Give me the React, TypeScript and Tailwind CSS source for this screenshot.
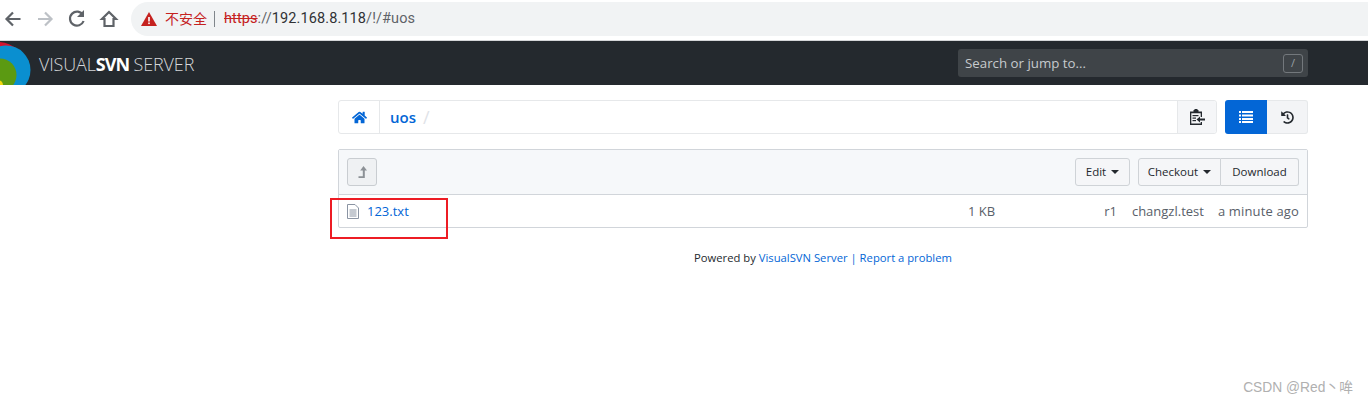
import { FaHome, FaHistory } from "react-icons/fa";

const FONT = "font-['Open_Sans','Noto_Sans_CJK_SC',sans-serif]";

const BrowserBar = () => (
  <div className="h-[41px] bg-white flex items-start border-b border-[#d4d6d8] font-['Roboto','Noto_Sans_CJK_SC',sans-serif]">
    <div className="w-[131px] h-[38px] flex items-center shrink-0">
      <svg width="131" height="38" viewBox="0 0 131 38" fill="none">
        <path d="M20.500 19H7M13 12.500L6.500 19l6.500 6.500" stroke="#5f6368" strokeWidth="2.200" />
        <path d="M38 19h13.500M45 12.500l6.500 6.500-6.500 6.500" stroke="#bdc1c6" strokeWidth="2.200" />
        <path d="M83 15a7 7 0 1 0 .6 6" stroke="#5f6368" strokeWidth="2.200" />
        <path d="M84 10v7h-7z" fill="#5f6368" />
        <path d="M109 12l-7 7H104.500v7h9v-7h2.500z" stroke="#5f6368" strokeWidth="2.200" strokeLinejoin="miter" />
      </svg>
    </div>
    <div className="mt-[2px] flex-1 h-[34px] bg-[#f1f3f4] rounded-l-[17px] flex items-center pl-[10px]">
      <svg width="16" height="14" viewBox="0 0 16 14" className="mr-[8px]">
        <path d="M8 0l8 14H0z" fill="#c5221f" />
        <rect x="7.200" y="5" width="1.600" height="4.500" fill="#fff" />
        <rect x="7.200" y="10.500" width="1.600" height="1.600" fill="#fff" />
      </svg>
      <span className="text-[14px] text-[#c5221f] leading-none">不安全</span>
      <span className="w-px h-[16px] bg-[#80868b] mx-[7px]" />
      <span className="ml-[2px] text-[14.500px] text-[#5f6368] tracking-[0.1px]">
        <span className="text-[#c5221f] line-through">https</span>://<span className="text-[#303134]">192.168.8.118</span>/!/#uos
      </span>
    </div>
  </div>
);

const Logo = () => (
  <div className="w-[31px] h-[44px] relative overflow-hidden shrink-0">
    <svg width="31" height="44" viewBox="0 0 31 44">
      <circle cx="-2" cy="30" r="29" fill="#d3122f" />
      <circle cx="6" cy="29" r="24.500" fill="#0a8fd0" />
      <circle cx="0" cy="34" r="16.500" fill="#5b9a12" />
      <circle cx="-2" cy="44" r="5" fill="#f2d70f" />
    </svg>
  </div>
);

const NavBar = () => (
  <div className={`h-[44px] bg-[#24292e] flex items-center ${FONT}`}>
    <Logo />
    <div className="ml-[8px] mt-[3px] text-[#d5d7d9] text-[18px] tracking-[-0.15px] whitespace-nowrap font-light">
      VISUAL<span className="font-bold text-white tracking-[-1px]">SVN</span> SERVER
    </div>
    <div className="ml-auto mr-[60px] w-[350px] h-[28px] bg-[#3f4448] rounded-[3px] flex items-center justify-between pl-[7px] pr-[5px]">
      <span className="mt-[1px] text-[13.300px] text-[#c6cacd]">Search or jump to...</span>
      <span className="w-[20px] h-[19px] border border-[#73787c] rounded-[3px] text-[#9aa0a4] text-[11px] flex items-center justify-center">/</span>
    </div>
  </div>
);

const ClipboardIcon = () => (
  <svg width="15" height="16" viewBox="0 0 15 16" fill="#24292e">
    <path d="M0 2.500h3.500V1h5v1.500H12V8h-1.300V4.200H1.300v10.300h9.400V13H12v3H0z" />
    <rect x="4.500" y="0" width="3" height="3.500" />
    <rect x="2.500" y="6" width="6" height="1.200" />
    <rect x="2.500" y="8.500" width="3.500" height="1.200" />
    <rect x="2.500" y="11" width="3.500" height="1.200" />
    <path d="M6.500 10.500l3.500-3v2h5v2h-5v2z" />
  </svg>
);

const ListIcon = () => (
  <svg width="14" height="12" viewBox="0 0 14 12" fill="#fff">
    {[0, 3.500, 7, 10].map((y) => (
      <g key={y}>
        <rect x="0" y={y} width="2" height="2" />
        <rect x="3" y={y} width="11" height="2" />
      </g>
    ))}
  </svg>
);

const FileIcon = () => (
  <svg width="12" height="15" viewBox="0 0 12 15" fill="none" stroke="#8a94a3">
    <path d="M.5.500h7.500l3.500 3.500v10.500H.5z" fill="#fff" />
    <path d="M2.500 6h7M2.500 8h7M2.500 10h7M2.500 12h7" />
  </svg>
);

const UpIcon = () => (
  <svg width="9" height="12" viewBox="0 0 9 12" fill="#8c9196">
    <path d="M5.500 0L9 4.500H6.800V12H.5v-1.800h4.300V4.500H2.200z" />
  </svg>
);

const Breadcrumb = () => (
  <div className="flex mt-[15px]">
    <div className="flex-1 h-[34px] border border-[#e6e8ea] rounded-[3px] flex items-center">
      <div className="w-[41px] h-full border-r border-[#e6e8ea] flex items-center justify-center text-[#0366d6] text-[15px]">
        <FaHome />
      </div>
      <span className="ml-[10px] text-[15px] font-semibold text-[#0366d6]">uos</span>
      <span className="ml-[7px] text-[18px] text-[#dfe3e8]">/</span>
      <div className="ml-auto w-[39px] h-full bg-[#f5f6f8] border-l border-[#e6e8ea] rounded-r-[3px] flex items-center justify-center">
        <ClipboardIcon />
      </div>
    </div>
    <div className="ml-[8px] flex h-[34px]">
      <div className="w-[42px] bg-[#0366d6] rounded-l-[3px] flex items-center justify-center">
        <ListIcon />
      </div>
      <div className="w-[41px] bg-[#f3f4f6] border border-l-0 border-[#e6e8ea] rounded-r-[3px] flex items-center justify-center text-[13px] text-[#24292e]">
        <FaHistory />
      </div>
    </div>
  </div>
);

const btn = "h-[28px] px-[10px] flex items-center text-[11.500px] font-medium text-[#24292e] bg-[#f5f6f8] border border-[#cfd3d7]";

const Caret = () => (
  <span className="ml-[5px] w-0 h-0 border-x-[4px] border-x-transparent border-t-[4px] border-t-[#24292e]" />
);

const FilePanel = () => (
  <div className="mt-[15px] border border-[#d1d5da] rounded-[2px] relative">
    <div className="h-[45px] bg-[#f6f8fa] border-b border-[#d1d5da] flex items-center px-[8px]">
      <div className="w-[30px] h-[28px] bg-[#eff1f3] border border-[#c9cdd1] rounded-[3px] flex items-center justify-center">
        <UpIcon />
      </div>
      <div className={`${btn} ml-auto rounded-[3px] w-[55px] justify-center`}>
        Edit
        <Caret />
      </div>
      <div className={`${btn} ml-[8px] rounded-l-[3px] w-[83px] justify-center`}>
        Checkout
        <Caret />
      </div>
      <div className={`${btn} border-l-0 rounded-r-[3px] w-[78px] justify-center`}>Download</div>
    </div>
    <div className="h-[32px] pt-[1px] flex items-center pl-[8px] pr-[8px] text-[13px] text-[#586069]">
      <FileIcon />
      <span className="ml-[8px] text-[13px] text-[#0366d6]">123.txt</span>
      <span className="ml-auto">1 KB</span>
      <span className="ml-[109px]">r1</span>
      <span className="ml-[15px]">changzl.test</span>
      <span className="ml-[14px] tracking-[0.15px]">a minute ago</span>
    </div>
  </div>
);

const App = () => (
  <div className={`relative w-[1368px] h-[403px] bg-white overflow-hidden ${FONT}`}>
    <BrowserBar />
    <NavBar />
    <div className="w-[970px] ml-[338px]">
      <Breadcrumb />
      <FilePanel />
      <div className="mt-[22px] text-center text-[11.250px] text-[#24292e]">
        Powered by <span className="text-[#0366d6]">VisualSVN Server</span> <span className="text-[#0366d6]">| Report a problem</span>
      </div>
    </div>
    <div className="absolute left-[330px] top-[198px] w-[118px] h-[41px] border-2 border-[#ed1c24]" />
    <div className="absolute right-[15px] top-[378px] text-[13.800px] text-[#b0b0b0] font-['Liberation_Sans','Noto_Sans_CJK_SC',sans-serif]">
      CSDN @Red丶哞
    </div>
  </div>
);

export default App;
